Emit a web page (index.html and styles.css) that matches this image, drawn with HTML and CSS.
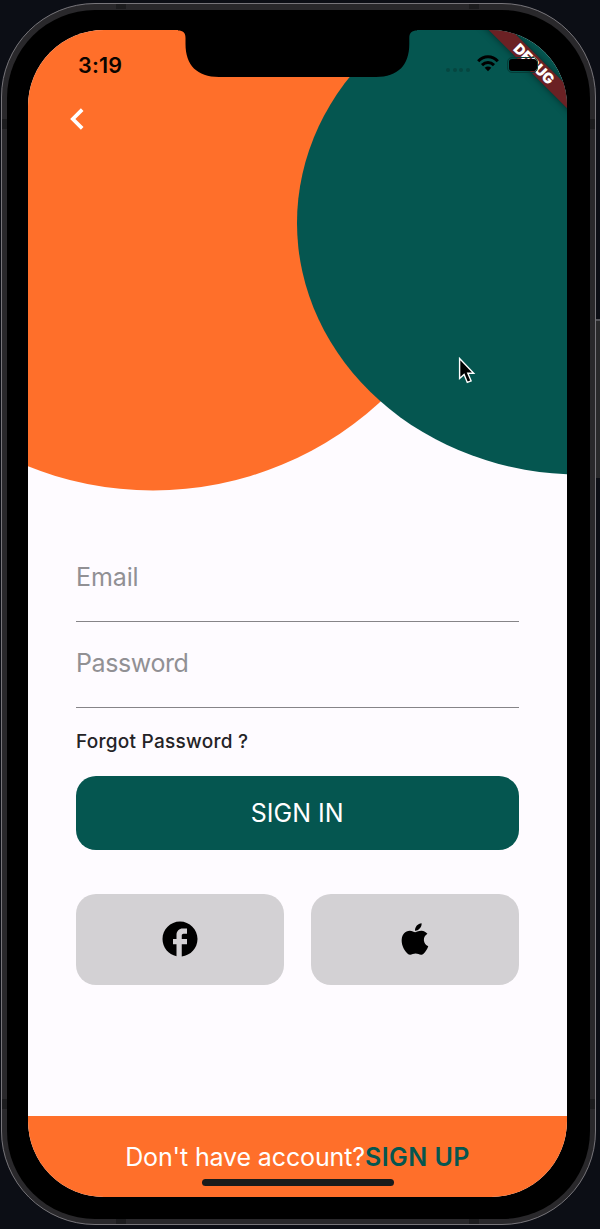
FILE: index.html
```html
<!DOCTYPE html>
<html lang="en">
<head>
<meta charset="utf-8">
<meta name="viewport" content="width=device-width, initial-scale=1">
<title>Sign in</title>
<link rel="stylesheet" href="styles.css">
</head>
<body>
<div class="stage">
  <div class="side-button"></div>
  <div class="phone">
    <i class="antenna top start"></i><i class="antenna top end"></i>
    <i class="antenna bottom start"></i><i class="antenna bottom end"></i>
    <i class="antenna left upper"></i><i class="antenna left lower"></i>
    <i class="antenna right upper"></i><i class="antenna right lower"></i>
    <div class="bezel">
      <div class="screen">
        <svg class="art" viewBox="28 30 539 470" aria-hidden="true">
          <circle cx="153" cy="154" r="336.4" fill="#ff6f2a"/>
          <ellipse cx="580" cy="223" rx="283" ry="251.5" fill="#055650"/>
        </svg>
        <header class="status">
          <span class="time">3:19</span>
          <span class="indicators">
            <span class="dots"><i></i><i></i><i></i><i></i></span>
            <svg class="wifi" viewBox="0 0 22 17">
              <g fill="none" stroke="#000" stroke-width="3">
                <path d="M1.2 6.2C6.8.4 15.2.4 20.8 6.2"/>
                <path d="M5 10.1C8.5 6.7 13.5 6.7 17 10.1"/>
              </g>
              <path d="M7.7 12.8C9.6 11 12.4 11 14.3 12.8L11 16.2Z"/>
            </svg>
          </span>
        </header>
        <button class="back" aria-label="Back">
          <svg viewBox="0 0 14 22"><path d="M12.2 1.6 2.8 11l9.4 9.4" fill="none" stroke="#fff" stroke-width="3.7"/></svg>
        </button>
        <main class="form">
          <div class="field email">Email</div>
          <div class="field password">Password</div>
          <a class="forgot">Forgot Password ?</a>
          <button class="signin">SIGN IN</button>
          <div class="social">
            <button aria-label="Facebook"><svg viewBox="0 0 24 24"><path d="M22 12c0-5.52-4.48-10-10-10S2 6.48 2 12c0 4.84 3.44 8.87 8 9.8V15H8v-3h2V9.5C10 7.57 11.57 6 13.5 6H16v3h-2c-.55 0-1 .45-1 1v2h3v3h-3v6.95c5.05-.5 9-4.76 9-9.95z"/></svg></button>
            <button aria-label="Apple"><svg viewBox="0 0 24 24"><path d="M17.05 20.28c-.98.95-2.05.8-3.08.35-1.09-.46-2.09-.48-3.24 0-1.44.62-2.2.44-3.06-.35C2.79 15.25 3.51 7.59 9.05 7.31c1.35.07 2.29.74 3.08.8 1.18-.24 2.31-.93 3.57-.84 1.51.12 2.65.72 3.4 1.8-3.12 1.87-2.38 5.98.48 7.13-.57 1.5-1.31 2.99-2.54 4.09zM12.03 7.25c-.15-2.23 1.66-4.07 3.74-4.25.29 2.58-2.34 4.5-3.74 4.25z"/></svg></button>
          </div>
        </main>
        <footer class="footer">
          <p><span class="ask">Don't have account?</span><b class="signup">SIGN UP</b></p>
          <i class="home"></i>
        </footer>
        <div class="debug">DEBUG</div>
        <div class="battery"></div>
        <svg class="notch" viewBox="178 29 240 50" aria-hidden="true"><path d="M178 29V30.6C183 30.6 185.5 32.5 185.5 38V44C185.5 65 197 77 219 77H376C398 77 409.3 65 409.3 44V38C409.3 32.5 412 30.6 417 30.6V29Z"/></svg>
        <svg class="cursor" viewBox="0 0 18 28"><path d="M1.6 1.5V21.5L6.1 17.4 9.3 25.4 13.1 23.8 9.8 16.2H15.7Z" fill="#000" stroke="#fff" stroke-width="1.4"/></svg>
      </div>
    </div>
  </div>
</div>
</body>
</html>
```
FILE: styles.css
```css
* { box-sizing: border-box; }
body { margin: 0; background: #0c0e15; font-family: Inter, "Liberation Sans", sans-serif; }
button { border: 0; padding: 0; font: inherit; display: flex; align-items: center; justify-content: center; }
.stage { position: relative; height: 1229px; overflow: hidden; padding: 3px 4px 4px 1px; }
.side-button { position: absolute; right: 0; top: 319px; width: 5px; height: 159px; background: #29292b; border-top: 2px solid #55555a; }
.phone { position: relative; height: 1222px; padding: 5px; border: 1px solid #77757a; border-radius: 94px; background: #29282b; }
.bezel { height: 1209px; margin-top: 1px; border-radius: 88px; background: #000; padding: 20px 21px; }
.screen { position: relative; width: 539px; height: 1167px; overflow: hidden; border-radius: 76px; background: #fefbff; display: flex; flex-direction: column; }

.antenna { position: absolute; background: #1c1c1e; }
.antenna.top, .antenna.bottom { width: 10px; height: 5px; }
.antenna.left, .antenna.right { width: 5px; height: 10px; }
.antenna.top { top: 0; }
.antenna.bottom { bottom: 0; }
.antenna.left { left: 0; }
.antenna.right { right: 0; }
.antenna.start { left: 114px; }
.antenna.end { right: 116px; }
.antenna.upper { top: 115px; }
.antenna.lower { bottom: 115px; }

.art { position: absolute; left: 0; top: 0; width: 539px; height: 470px; }
.status { position: relative; height: 68px; padding: 21px 68px 0 50px; display: flex; justify-content: space-between; }
.time { font-size: 21.5px; line-height: 28px; font-weight: 600; color: #0b0500; letter-spacing: 0.2px; }
.indicators { display: flex; align-items: flex-start; gap: 7px; }
.dots { display: flex; gap: 2.4px; padding-top: 17px; }
.dots i { width: 4.2px; height: 4.2px; border-radius: 50%; background: #064640; }
.wifi { width: 22px; height: 17px; margin-top: 4px; }
.back { position: relative; width: 14px; height: 22px; margin: 10px 0 0 42px; background: none; }
.back svg { width: 14px; height: 22px; }

.form { position: relative; padding: 401.5px 48.5px 0 48px; display: flex; flex-direction: column; }
.field { border-bottom: 1.4px solid #868488; color: #919094; font-size: 25px; line-height: 30px; letter-spacing: -0.1px; }
.email { height: 90.5px; padding-top: 30px; }
.password { height: 86px; padding-top: 26px; letter-spacing: -0.4px; }
.forgot { margin-top: 22px; font-size: 19px; line-height: 24px; font-weight: 500; letter-spacing: 0.26px; color: #242326; }
.signin { margin-top: 22px; height: 73.5px; padding-top: 1px; border-radius: 20px; background: #055650; color: #fff; font-size: 25px; }
.social { display: flex; gap: 27.5px; margin-top: 44px; }
.social button { flex: 1; height: 91px; border-radius: 20px; background: #d3d1d4; }
.social svg { width: 42px; height: 42px; }

.footer { position: relative; margin-top: auto; height: 81px; background: #ff6f2a; display: flex; flex-direction: column; align-items: center; }
.footer p { margin: 26px 0 0; font-size: 25px; line-height: 30px; color: #fff; white-space: nowrap; }
.ask { letter-spacing: -0.13px; }
.signup { color: #055650; font-weight: 600; letter-spacing: 0.45px; }
.home { width: 192px; height: 7px; margin-top: 7px; border-radius: 4px; background: #191b1b; }

.debug { position: absolute; left: 425.5px; top: 25.5px; width: 160px; height: 16px; transform: rotate(45deg); background: #6b2124; color: #fff; font-size: 14.5px; line-height: 16px; font-weight: 900; text-align: center; box-shadow: 0 0 7px rgba(0, 0, 0, .5); }
.battery { position: absolute; left: 479px; top: 27px; width: 31px; height: 16px; border: 1.3px solid #063c37; border-radius: 5px; }
.battery::before { content: ""; position: absolute; inset: 1.2px; right: 0; border-radius: 3px; background: #000; }
.notch { position: absolute; left: 150px; top: -1px; width: 240px; height: 50px; }
.cursor { position: absolute; left: 430px; top: 326.5px; width: 18px; height: 28px; }
```
